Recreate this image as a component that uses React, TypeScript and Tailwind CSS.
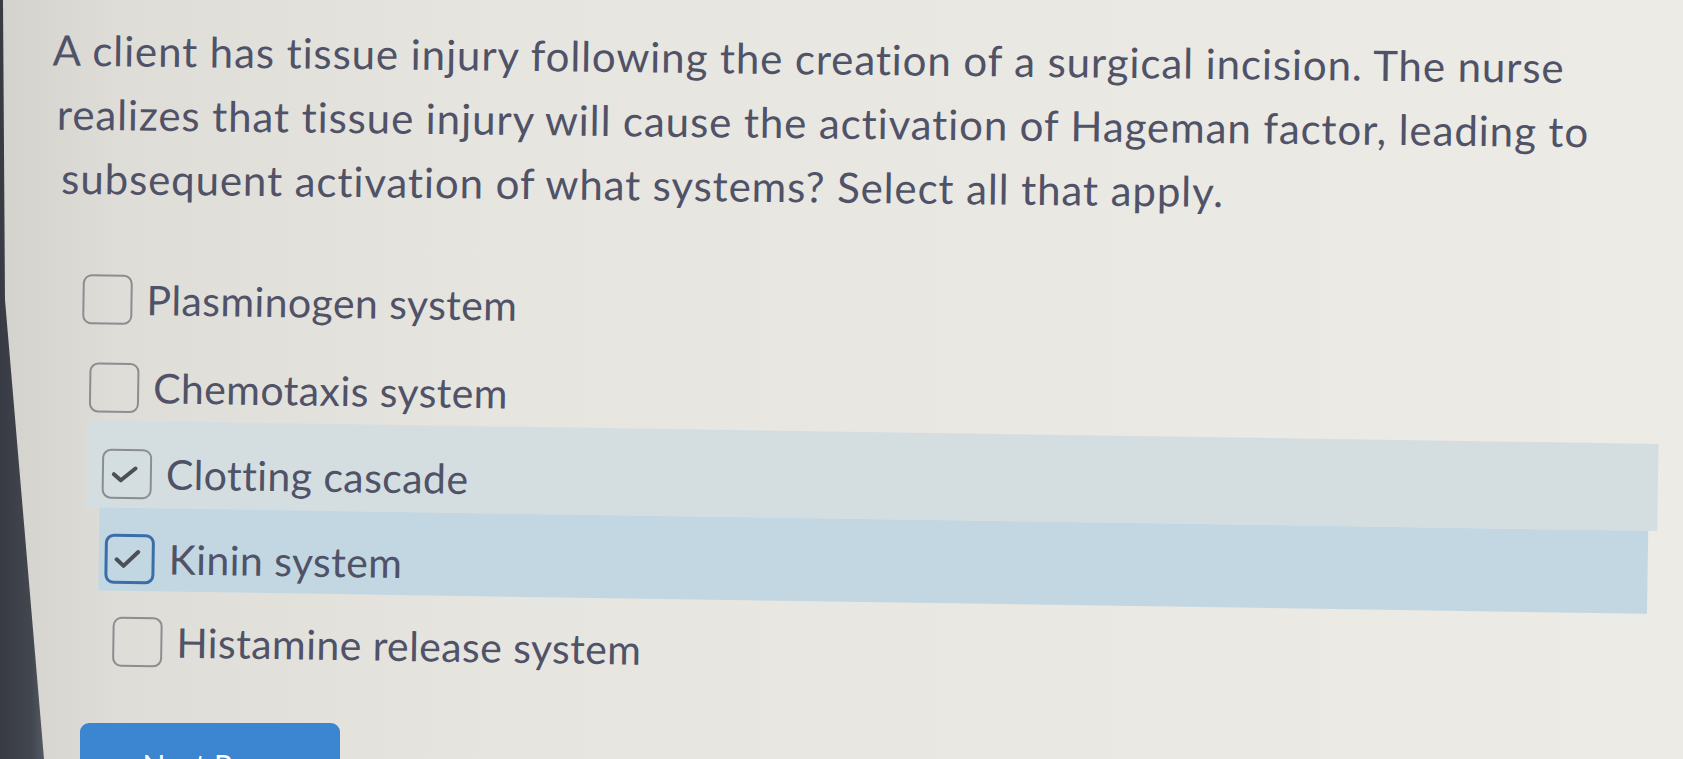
import React from "react";

function Check({ big }: { big?: boolean }) {
  return (
    <svg width="27" height={big ? 20 : 17} viewBox={big ? "0 0 27 20" : "0 0 27 17"} fill="none">
      <path
        d={big ? "M3 10.5 L10 17 L24.5 3" : "M3 8.5 L10 14.5 L24.5 2.5"}
        stroke="#4d4f55"
        strokeWidth="4"
        strokeLinecap="round"
        strokeLinejoin="round"
      />
    </svg>
  );
}

type Opt = {
  label: string;
  checked: boolean;
  focus?: boolean;
  row: string;
};

const options: Opt[] = [
  { label: "Plasminogen system", checked: false, row: "h-[88px] pt-[19px] ml-[70px] pl-[10px]" },
  { label: "Chemotaxis system", checked: false, row: "h-[77px] pt-[19px] ml-[78px] pl-[10px]" },
  { label: "Clotting cascade", checked: true, row: "h-[87px] pt-[28px] ml-[87px] pl-[15px] mr-[25px] bg-[#d4dee1]" },
  { label: "Kinin system", checked: true, focus: true, row: "h-[83px] pt-[26px] ml-[100px] pl-[6px] mr-[34px] bg-[#c3d7e2]" },
  { label: "Histamine release system", checked: false, row: "h-[90px] pt-[26px] ml-[105px] pl-[10px]" },
];

export default function App() {
  return (
    <div
      className="relative w-[1683px] h-[759px] overflow-hidden bg-[linear-gradient(90deg,#d3d2cd_0px,#dfddd8_120px,#e6e5e0_500px,#eae9e4_1200px,#ecebe6_1683px)] text-[#505267]"
      style={{ fontFamily: "Lato, 'Open Sans', sans-serif" }}
    >
      <div className="flex flex-col pt-[17px]">
        <div className="origin-left rotate-[0.66deg] text-[42px] leading-[64px] tracking-[0.9px]">
          <span className="block ml-[52px] whitespace-nowrap">
            A client has tissue injury following the creation of a surgical incision. The nurse
          </span>
          <span className="block ml-[57px] whitespace-nowrap">
            realizes that tissue injury will cause the activation of Hageman factor, leading to
          </span>
          <span className="block ml-[62px] whitespace-nowrap">
            subsequent activation of what systems? Select all that apply.
          </span>
        </div>

        <div className="mt-[45px] flex origin-left rotate-[0.86deg] flex-col">
          {options.map((o) => (
            <div key={o.label} className={o.row}>
              <div className="flex items-center gap-[14px]">
                <div
                  className={
                    "flex h-[50px] w-[50px] shrink-0 items-center justify-center rounded-[9px] pr-[6px] " +
                    (o.focus ? "border-[3px] border-[#3b6ea8]" : "border-2 border-[#8c8d90]")
                  }
                >
                  {o.checked ? <Check big={o.focus} /> : null}
                </div>
                <span className="text-[41px] leading-[48px] tracking-[0.4px] whitespace-nowrap">{o.label}</span>
              </div>
            </div>
          ))}
        </div>

        <div className="mt-[44px] ml-[80px] flex h-[84px] w-[260px] items-center justify-center rounded-[9px] bg-[#3c85d1]">
          <span className="text-[30px] leading-[36px] text-white">Next Page</span>
        </div>
      </div>

      <div className="pointer-events-none absolute left-0 top-0 h-full w-[46px] bg-[linear-gradient(90deg,#383b43,#434750_70%,#575c67)] [clip-path:polygon(0_0,3px_0,5px_300px,44px_100%,0_100%)]" />
    </div>
  );
}
